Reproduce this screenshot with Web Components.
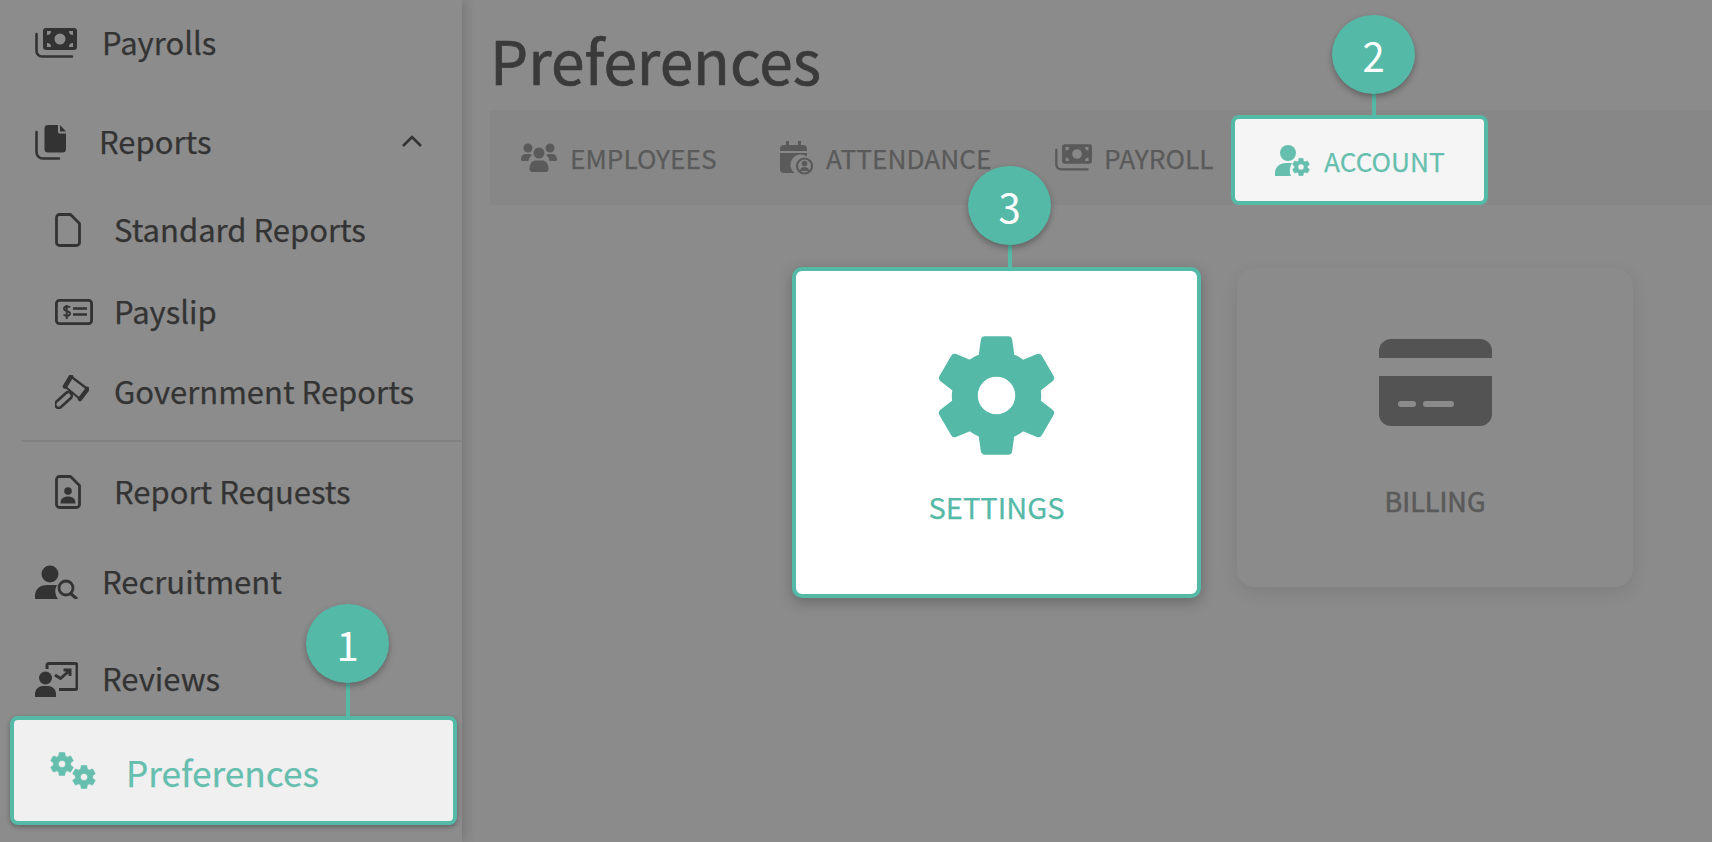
<!DOCTYPE html>
<html lang="en">
<head>
<meta charset="utf-8">
<title>Preferences</title>
<style>
    html, body { margin: 0; height: 100%; overflow: hidden; background: #8c8c8c; }
    body { font-family: "Noto Sans CJK JP", "Noto Sans", sans-serif; }
</style>
</head>
<body>
<app-shell>
    <nav-item slot="nav" icon="payrolls" style="height:86px;--gap:25px">Payrolls</nav-item>
    <nav-item slot="nav" icon="reports" caret style="height:86px;margin-top:13px;--gap:33px">Reports</nav-item>
    <nav-item slot="nav" icon="doc" sub style="height:80px;margin-top:5px">Standard Reports</nav-item>
    <nav-item slot="nav" icon="payslip" sub style="height:80px;margin-top:2px;--gap:21px">Payslip</nav-item>
    <nav-item slot="nav" icon="gavel" sub style="height:80px;--gap:25px">Government Reports</nav-item>
    <nav-rule slot="nav"></nav-rule>
    <nav-item slot="nav" icon="request" sub style="height:80px;margin-top:10px">Report Requests</nav-item>
    <nav-item slot="nav" icon="recruit" style="height:80px;margin-top:10px;--gap:24px">Recruitment</nav-item>
    <nav-item slot="nav" icon="reviews" style="height:80px;margin-top:17px;--gap:24px">Reviews</nav-item>
    <nav-item slot="nav" icon="cogs" active style="margin-top:-3px">Preferences
        <step-badge slot="badge" style="left:292px;--stem:37px">1</step-badge>
    </nav-item>

    <page-title slot="title">Preferences</page-title>

    <tab-item slot="tabs" icon="employees" style="width:259px">EMPLOYEES</tab-item>
    <tab-item slot="tabs" icon="attendance" style="width:275px">ATTENDANCE</tab-item>
    <tab-item slot="tabs" icon="payrolls" style="width:176px;--tab-gap:12px">PAYROLL</tab-item>
    <tab-item slot="tabs" icon="account" active>ACCOUNT
        <step-badge slot="badge" style="left:97px;--stem:25px">2</step-badge>
    </tab-item>

    <feature-card slot="cards" icon="gear" active>SETTINGS
        <step-badge slot="badge" style="left:172px;--stem:26px">3</step-badge>
    </feature-card>
    <feature-card slot="cards" icon="card">BILLING</feature-card>
</app-shell>

<script>
// Icons are plain svg strings, keyed by name. Colours come from currentColor.
const GEAR = 'M19.14 12.94c.04-.3.06-.61.06-.94 0-.32-.02-.64-.07-.94l2.03-1.58c.18-.14.23-.41.12-.61l-1.92-3.32c-.12-.22-.37-.29-.59-.22l-2.39.96c-.5-.38-1.03-.7-1.62-.94l-.36-2.54c-.04-.24-.24-.41-.48-.41h-3.84c-.24 0-.43.17-.47.41l-.36 2.54c-.59.24-1.13.57-1.62.94l-2.39-.96c-.22-.08-.47 0-.59.22L2.74 8.87c-.12.21-.08.47.12.61l2.03 1.58c-.05.3-.09.63-.09.94s.02.64.07.94l-2.03 1.58c-.18.14-.23.41-.12.61l1.92 3.32c.12.22.37.29.59.22l2.39-.96c.5.38 1.03.7 1.62.94l.36 2.54c.05.24.24.41.48.41h3.84c.24 0 .44-.17.47-.41l.36-2.54c.59-.24 1.13-.56 1.62-.94l2.39.96c.22.08.47 0 .59-.22l1.92-3.32c.12-.22.07-.47-.12-.61l-2.01-1.58z';
const HOLE = (r) => `M12 ${12 - r}a${r} ${r} 0 1 0 0 ${r * 2} ${r} ${r} 0 0 0 0-${r * 2}z`;
const gearPath = (r, sw) => `<path fill-rule="evenodd" stroke="currentColor" stroke-width="${sw}" stroke-linejoin="round" d="${GEAR}${HOLE(r)}"/>`;
const svg = (w, h, vb, body) => `<svg width="${w}" height="${h}" viewBox="${vb}" fill="currentColor" aria-hidden="true">${body}</svg>`;
const ICONS = {
    payrolls: svg(42, 30, '0 0 42 30', `
        <path fill-rule="evenodd" d="M11 0h28a3 3 0 0 1 3 3v16a3 3 0 0 1-3 3H11a3 3 0 0 1-3-3V3a3 3 0 0 1 3-3zm14 5.5a5.5 5.5 0 1 0 0 11 5.5 5.5 0 0 0 0-11zM12 3v4a4 4 0 0 0 4-4zm22 0a4 4 0 0 0 4 4V3zM12 15v4h4a4 4 0 0 0-4-4zm26 0a4 4 0 0 0-4 4h4z"/>
        <path d="M1.5 6v17a5.5 5.5 0 0 0 5.5 5.5h30" fill="none" stroke="currentColor" stroke-width="2.6" stroke-linecap="round"/>`),
    reports: svg(31, 35, '0 0 31 35', `
        <path d="M13 0h10v7a1.5 1.5 0 0 0 1.5 1.5H31V24a3.5 3.5 0 0 1-3.5 3.5H13A3.5 3.5 0 0 1 9.500 24V3.500A3.500 3.500 0 0 1 13 0zM25 0l6 6.500h-6z"/>
        <path d="M1.500 7v20a6.500 6.500 0 0 0 6.500 6.500h16" fill="none" stroke="currentColor" stroke-width="2.600" stroke-linecap="round"/>`),
    doc: svg(26, 34, '0 0 26 34', `<path d="M4 1.500h11.500L24.500 10.500v19a3 3 0 0 1-3 3H4.500a3 3 0 0 1-3-3v-25a3 3 0 0 1 3-3z" fill="none" stroke="currentColor" stroke-width="2.800" stroke-linejoin="round"/>`),
    payslip: svg(38, 26, '0 0 38 26', `
        <rect x="1.400" y="1.400" width="35.200" height="23.200" rx="3" fill="none" stroke="currentColor" stroke-width="2.800"/>
        <path d="M15 8.500c-1-1.400-6-1.800-6 1.200 0 3.200 6 1.600 6 4.800 0 3-5.200 2.600-6.400 1M11.700 6v14" fill="none" stroke="currentColor" stroke-width="1.900"/>
        <path d="M18 9.500h14M18 15.500h14" stroke="currentColor" stroke-width="2.600" fill="none"/>`),
    gavel: svg(34, 34, '0 0 34 34', `
        <path d="M16 1.500L32.500 14 25 24 10 11.500z" fill="none" stroke="currentColor" stroke-width="2.200" stroke-linejoin="round"/>
        <path d="M16 1.500L10 11.500M32.500 14L25 24" fill="none" stroke="currentColor" stroke-width="4.500" stroke-linecap="round"/>
        <rect x="-1.500" y="21.500" width="20" height="7" rx="3.500" transform="rotate(-42 8.500 25)" fill="none" stroke="currentColor" stroke-width="2.600"/>`),
    request: svg(26, 34, '0 0 26 34', `
        <path d="M4 1.500h11.500L24.500 10.500v19a3 3 0 0 1-3 3H4.500a3 3 0 0 1-3-3v-25a3 3 0 0 1 3-3z" fill="none" stroke="currentColor" stroke-width="2.800" stroke-linejoin="round"/>
        <circle cx="13" cy="16" r="3.800"/><path d="M5.500 28.500c0-5 3-7 7.500-7s7.500 2 7.500 7z"/>`),
    recruit: svg(43, 34, '0 0 43 34', `
        <circle cx="15" cy="9" r="8.500"/>
        <path d="M0 34v-3c0-8 6-11 13-11h9a13 13 0 0 0 1 14z"/>
        <circle cx="31" cy="23" r="7" fill="none" stroke="currentColor" stroke-width="2.800"/>
        <path d="M35.500 28.500l6.500 5.500" stroke="currentColor" stroke-width="3" fill="none"/>`),
    reviews: svg(43, 35, '0 0 43 35', `
        <path d="M12 7V3.500A2 2 0 0 1 14 1.500h26a2 2 0 0 1 2 2v22a2 2 0 0 1-2 2H24" fill="none" stroke="currentColor" stroke-width="3"/>
        <path d="M20 13l5.500 3.500 9-8M28.500 8h6.500v6" fill="none" stroke="currentColor" stroke-width="3"/>
        <circle cx="10.500" cy="16" r="6.500"/><path d="M0 35v-3c0-5 4-8 8-8h5c4 0 8 3 8 8v3z"/>`),
    cogs: svg(47, 38, '0 0 47 38', `
        <g transform="translate(-2.400 -2.400) scale(1.200)">${gearPath(3, .5)}</g>
        <g transform="translate(19.600 10.600) scale(1.200)">${gearPath(3, .5)}</g>`),
    employees: svg(36, 29, '0 0 36 29', `
        <circle cx="7" cy="5" r="4.500"/><circle cx="29" cy="5" r="4.500"/><circle cx="18" cy="10" r="5.500"/>
        <path d="M0 17c0-4 2-6 5-6h4l2 1c-2 1.500-3.500 4-3.500 6H1.500A1.500 1.500 0 0 1 0 17zM36 17c0-4-2-6-5-6h-4l-2 1c2 1.500 3.500 4 3.500 6h6A1.500 1.500 0 0 0 36 17zM8.500 26c0-6 3-8.500 7-8.500h5c4 0 7 2.500 7 8.500 0 2-1 3-2.500 3H11c-1.500 0-2.500-1-2.500-3z"/>`),
    attendance: svg(33, 34, '0 0 33 34', `
        <path d="M6 0h3v4h9V0h3v4h2a4 4 0 0 1 4 4v2H0V8a4 4 0 0 1 4-4h2z"/>
        <path d="M0 12h27v3.500A10 10 0 0 0 14.500 32H4a4 4 0 0 1-4-4z"/>
        <circle cx="24.500" cy="25" r="7.500" fill="none" stroke="currentColor" stroke-width="2.200"/>
        <circle cx="24.500" cy="22.500" r="2.800"/><path d="M20 30c0-3 2-4 4.500-4s4.500 1 4.500 4z"/>`),
    account: svg(36, 31, '0 0 36 31', `
        <circle cx="13" cy="8" r="8"/>
        <path d="M0 31v-3c0-6 5-10 11-10h6c-2 3-3 9-1 13z"/>
        <g transform="translate(15.200 11.200) scale(.9)">${gearPath(3.400, .6)}</g>`),
    gear: svg(145, 145, '0 0 24 24', gearPath(3.300, .4)),
    card: svg(113, 87, '0 0 113 87', `
        <path d="M12 0h89a12 12 0 0 1 12 12v7H0v-7A12 12 0 0 1 12 0z"/>
        <path fill-rule="evenodd" d="M0 37h113v38a12 12 0 0 1-12 12H12A12 12 0 0 1 0 75zM22 62a3 3 0 0 0 0 6h12a3 3 0 0 0 0-6zm25 0a3 3 0 0 0 0 6h25a3 3 0 0 0 0-6z"/>`)
};

class AppShell extends HTMLElement {
    constructor () {
        super();
        this.attachShadow({ mode: 'open' }).innerHTML = `
        <style>
            :host { display: flex; width: 1712px; height: 842px; overflow: hidden; background: #8b8b8b; }
            aside {
                flex: 0 0 462px;
                height: 842px;
                background: #8c8c8c;
                box-shadow: 2px 0 12px rgba(0, 0, 0, .16);
                display: flex;
                flex-direction: column;
                position: relative;
                z-index: 1;
            }
            main { flex: 1; padding-left: 28px; min-width: 0; }
            .tabs {
                display: flex;
                height: 95px;
                padding-left: 31px;
                background: #878787;
                align-items: stretch;
            }
            .cards {
                display: flex;
                align-items: flex-start;
                gap: 36px;
                padding: 62px 0 0 302px;
            }
        </style>
        <aside><slot name="nav"></slot></aside>
        <main>
            <slot name="title"></slot>
            <div class="tabs"><slot name="tabs"></slot></div>
            <div class="cards"><slot name="cards"></slot></div>
        </main>`;
    }
}

class NavItem extends HTMLElement {
    constructor () {
        super();
        this.attachShadow({ mode: 'open' }).innerHTML = `
        <style>
            :host {
                display: flex;
                flex: none;
                align-items: center;
                box-sizing: border-box;
                padding-left: 35px;
                font-size: 31px;
                -webkit-text-stroke: .25px currentColor;
                color: #333333;
                position: relative;
                --gap: 27px;
            }
            :host([sub]) { padding-left: 55px; --gap: 33px; }
            :host([active]) {
                height: 109px;
                width: 447px;
                margin-left: 10px;
                padding-left: 36px;
                --gap: 29px;
                border: 4px solid #55b9a8;
                border-radius: 8px;
                background: #f0f0f0;
                color: #66bfae;
                font-size: 35.2px;
                box-shadow: 0 2px 5px rgba(0, 0, 0, .3);
                z-index: 2;
            }
            .icon { display: flex; flex: none; }
            .label { margin-left: var(--gap); padding-bottom: 4px; line-height: 1; white-space: nowrap; }
            :host([active]) .label { padding: 2px 0 0; }
            .caret { position: absolute; left: 401px; top: 50%; margin-top: -8px; display: none; }
            :host([caret]) .caret { display: block; }
        </style>
        <span class="icon"></span>
        <span class="label"><slot></slot></span>
        <svg class="caret" width="22" height="14" viewBox="0 0 22 14" aria-hidden="true"><path d="M2 12l9-9 9 9" fill="none" stroke="#333" stroke-width="2.600"/></svg>
        <slot name="badge"></slot>`;
    }

    connectedCallback () {
        this.shadowRoot.querySelector('.icon').innerHTML = ICONS[this.getAttribute('icon')] || '';
    }
}

class NavRule extends HTMLElement {
    constructor () {
        super();
        this.attachShadow({ mode: 'open' }).innerHTML = `
        <style>
            :host { display: block; flex: none; height: 2px; margin: 8px 0 0 22px; background: #818181; }
        </style>`;
    }
}

class PageTitle extends HTMLElement {
    constructor () {
        super();
        this.attachShadow({ mode: 'open' }).innerHTML = `
        <style>
            :host {
                display: block;
                height: 110px;
                font-size: 60.4px;
                line-height: 118px;
                color: #3a3a3a;
                -webkit-text-stroke: .7px currentColor;
                white-space: nowrap;
            }
        </style>
        <slot></slot>`;
    }
}

class TabItem extends HTMLElement {
    constructor () {
        super();
        this.attachShadow({ mode: 'open' }).innerHTML = `
        <style>
            :host {
                display: flex;
                flex: none;
                align-items: center;
                gap: var(--tab-gap, 13px);
                font-size: 26.3px;
                -webkit-text-stroke: .25px currentColor;
                color: #5a5a5a;
                white-space: nowrap;
                position: relative;
            }
            :host([icon="payrolls"]) svg { width: 37px; height: 27px; }
            :host([active]) {
                box-sizing: border-box;
                width: 257px;
                height: 90px;
                margin: 5px 0 0;
                padding-left: 40px;
                border: 4px solid #55b9a8;
                border-radius: 8px;
                background: #f5f5f5;
                color: #66bfae;
                z-index: 2;
            }
            .icon { display: flex; flex: none; }
        </style>
        <span class="icon"></span>
        <span><slot></slot></span>
        <slot name="badge"></slot>`;
    }

    connectedCallback () {
        this.shadowRoot.querySelector('.icon').innerHTML = ICONS[this.getAttribute('icon')] || '';
    }
}

class FeatureCard extends HTMLElement {
    constructor () {
        super();
        this.attachShadow({ mode: 'open' }).innerHTML = `
        <style>
            :host {
                display: flex;
                flex-direction: column;
                align-items: center;
                box-sizing: border-box;
                width: 396px;
                height: 319px;
                margin-top: 1px;
                padding-top: 71px;
                border-radius: 18px;
                background: #8b8b8b;
                box-shadow: 0 6px 18px rgba(0, 0, 0, .09);
                color: #535353;
                font-size: 27px;
                -webkit-text-stroke: .6px currentColor;
                position: relative;
            }
            :host([active]) {
                width: 409px;
                height: 331px;
                margin-top: 0;
                padding-top: 52px;
                border: 4px solid #55b9a8;
                border-radius: 10px;
                background: #ffffff;
                color: #55b9a8;
                font-size: 29px;
                -webkit-text-stroke: .25px currentColor;
                box-shadow: 0 4px 14px rgba(0, 0, 0, .25);
                z-index: 2;
            }
            .icon { display: flex; flex: none; }
            .label { margin-top: 61px; line-height: 1; }
            :host([active]) .label { margin-top: 24px; }
            :host(:not([active])) .label { color: #5a5a5a; }
        </style>
        <span class="icon"></span>
        <span class="label"><slot></slot></span>
        <slot name="badge"></slot>`;
    }

    connectedCallback () {
        this.shadowRoot.querySelector('.icon').innerHTML = ICONS[this.getAttribute('icon')] || '';
    }
}

// Numbered callout with a stem that sits on top of the highlighted element.
class StepBadge extends HTMLElement {
    constructor () {
        super();
        this.attachShadow({ mode: 'open' }).innerHTML = `
        <style>
            :host {
                position: absolute;
                bottom: 100%;
                display: flex;
                flex-direction: column;
                align-items: center;
                width: 83px;
                z-index: 3;
            }
            .dot {
                display: flex;
                align-items: center;
                justify-content: center;
                width: 83px;
                height: 79px;
                border-radius: 50%;
                background: #55b9a8;
                box-shadow: 0 3px 6px rgba(0, 0, 0, .3);
                color: #ffffff;
                font-size: 40px;
                -webkit-text-stroke: 0;
                line-height: 1;
                position: relative;
            }
            .stem { width: 4px; height: var(--stem, 23px); background: #55b9a8; }
        </style>
        <div class="dot"><slot></slot></div>
        <div class="stem"></div>`;
    }
}

customElements.define('app-shell', AppShell);
customElements.define('nav-item', NavItem);
customElements.define('nav-rule', NavRule);
customElements.define('page-title', PageTitle);
customElements.define('tab-item', TabItem);
customElements.define('feature-card', FeatureCard);
customElements.define('step-badge', StepBadge);
</script>
</body>
</html>
